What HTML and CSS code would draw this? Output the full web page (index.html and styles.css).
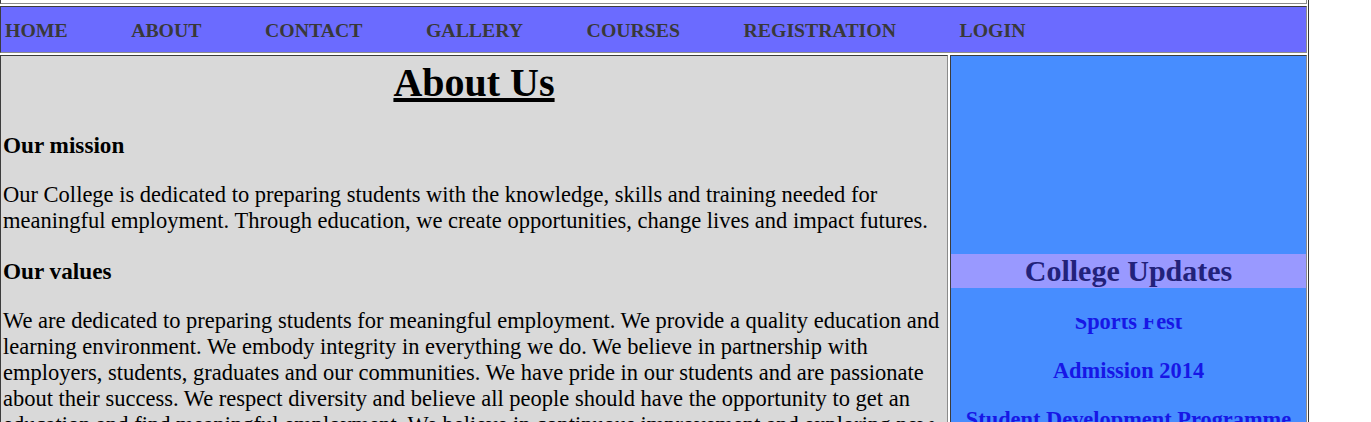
FILE: index.html
```html
<!DOCTYPE html>
<html lang="en">
<head>
<meta charset="utf-8">
<title>About Us</title>
<link rel="stylesheet" href="styles.css">
</head>
<body>
<div class="page">
  <div class="cell top-cell"></div>
  <nav class="cell nav">
    <a class="nav-link" href="#">HOME</a>
    <a class="nav-link" href="#">ABOUT</a>
    <a class="nav-link" href="#">CONTACT</a>
    <a class="nav-link" href="#">GALLERY</a>
    <a class="nav-link" href="#">COURSES</a>
    <a class="nav-link" href="#">REGISTRATION</a>
    <a class="nav-link" href="#">LOGIN</a>
  </nav>
  <div class="row">
    <main class="cell main">
      <h1 class="title">About Us</h1>
      <h4 class="subhead">Our mission</h4>
      <p class="text">Our College is dedicated to preparing students with the knowledge, skills and training needed for meaningful employment. Through education, we create opportunities, change lives and impact futures.</p>
      <h4 class="subhead">Our values</h4>
      <p class="text">We are dedicated to preparing students for meaningful employment. We provide a quality education and learning environment. We embody integrity in everything we do. We believe in partnership with employers, students, graduates and our communities. We have pride in our students and are passionate about their success. We respect diversity and believe all people should have the opportunity to get an education and find meaningful employment. We believe in continuous improvement and exploring new ideas and opportunities.</p>
    </main>
    <aside class="cell side">
      <h2 class="updates-title">College Updates</h2>
      <div class="marquee">
        <div class="marquee-track">
          <p class="update">Sports Fest</p>
          <p class="update">Admission 2014</p>
          <p class="update">Student Development Programme</p>
          <p class="update">Annual Day</p>
        </div>
      </div>
    </aside>
  </div>
</div>
</body>
</html>
```
FILE: styles.css
```css
html, body {
  margin: 0;
  padding: 0;
  background: #ffffff;
}

body {
  font-family: "Liberation Serif", "Times New Roman", serif;
  color: #000;
  overflow: hidden;
}

.page {
  width: 1309px;
  box-sizing: border-box;
  padding-right: 1px;
  border-right: 1px solid #3a3a3a;
  display: flex;
  flex-direction: column;
  gap: 2px;
  min-height: 700px;
}

.cell {
  box-sizing: border-box;
  border: 1px solid;
  border-color: #3c3c3c #8c8c8c #8c8c8c #3c3c3c;
}

.top-cell {
  height: 4px;
  border-top: none;
  background: #fff;
}

.nav {
  height: 47px;
  background: #6b6bff;
  display: flex;
  align-items: flex-start;
  gap: 63.5px;
  padding: 12px 0 0 4px;
}

.nav-link {
  font-size: 19.8px;
  line-height: 22px;
  font-weight: bold;
  color: #393939;
  text-decoration: none;
}

.row {
  display: flex;
  gap: 2px;
}

.main {
  width: 948px;
  flex: none;
  background: #d9d9d9;
  padding: 4px 2px 40px 2px;
}

.title {
  font-size: 40px;
  line-height: 46px;
  font-weight: bold;
  text-align: center;
  text-decoration: underline;
  margin: 0 0 26px 0;
}

.subhead {
  font-size: 23.2px;
  line-height: 26px;
  font-weight: bold;
  margin: 0 0 24px 0;
}

.text {
  font-size: 22.5px;
  line-height: 26px;
  margin: 0 0 24px 0;
}

.side {
  flex: 1;
  background: #478dff;
  padding: 198px 0 0 0;
  display: flex;
  flex-direction: column;
}

.updates-title {
  margin: 0;
  background: #9999ff;
  color: #22227a;
  font-size: 30px;
  line-height: 34px;
  font-weight: bold;
  text-align: center;
}

.marquee {
  margin-top: 30px;
  height: 300px;
  overflow: hidden;
}

.marquee-track {
  margin-top: -9px;
}

.update {
  margin: 0 0 23px 0;
  font-size: 22.4px;
  line-height: 26px;
  font-weight: bold;
  text-align: center;
  color: #1717e6;
}
```
